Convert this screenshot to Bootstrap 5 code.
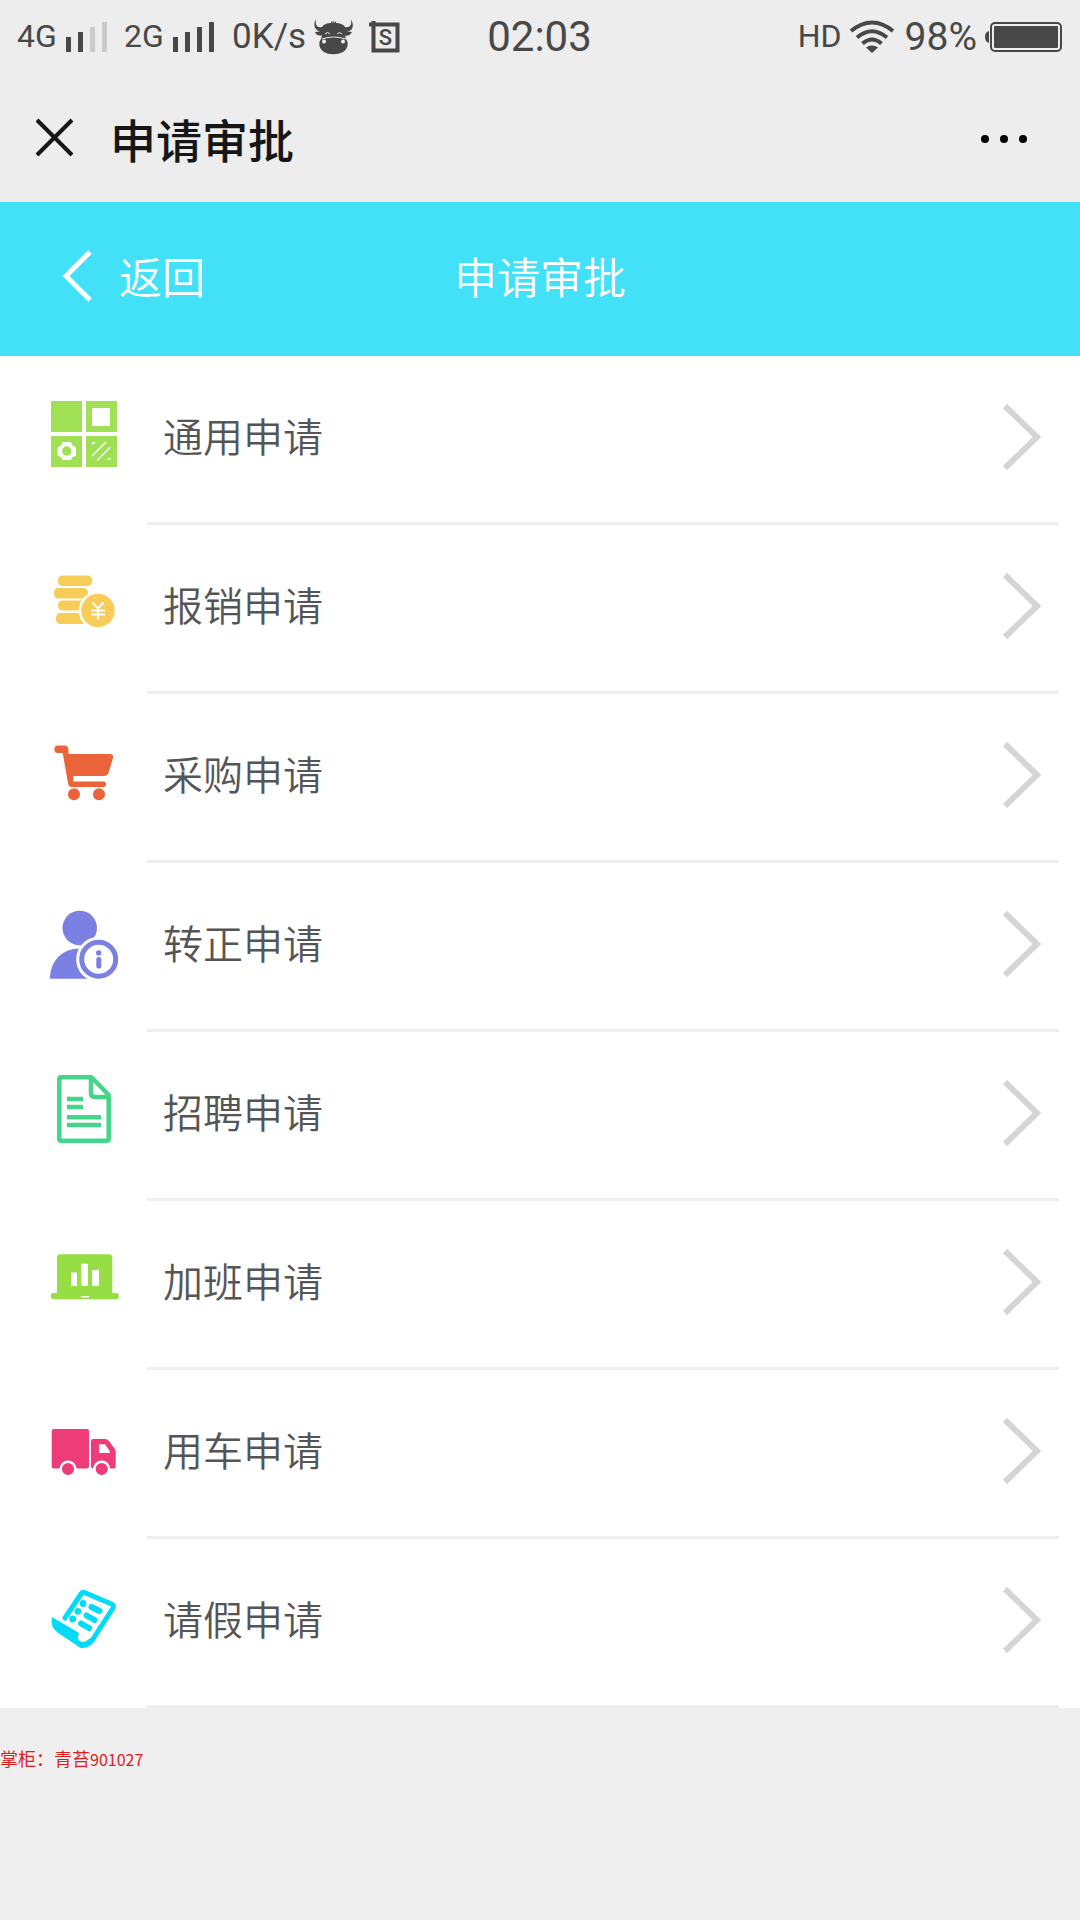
<!DOCTYPE html>
<html lang="zh-CN">
<head>
<meta charset="utf-8">
<meta name="viewport" content="width=device-width, initial-scale=1">
<title>申请审批</title>
<link href="https://cdn.jsdelivr.net/npm/bootstrap@5.3.0/dist/css/bootstrap.min.css" rel="stylesheet">
<style>
  body { background: #efefef; font-family: Roboto, "Noto Sans CJK SC", sans-serif; color: #555; }
  svg { display: block; flex: none; overflow: visible; }
  .status-bar { background: #ededed; color: #484848; height: 74px; padding: 0 18px 0 17px; line-height: 40px; }
  .status-side { flex: 1 1 0; }
  .net-label { font-size: 32px; width: 49px; margin-bottom: 3px; }
  .net-next { margin-left: 17px; }
  .rate-label { font-size: 35px; margin-left: 18px; width: 83px; }
  .clock { font-size: 42px; }
  .hd-label { font-size: 32px; font-weight: 400; margin-bottom: 3px; }
  .power-label { font-size: 39px; margin-left: 11px; }
  .app-bar { background: #ededed; color: #161616; height: 128px; padding: 0 50px 0 34px; }
  .app-title { font: 500 46px/60px "Noto Sans CJK SC", sans-serif; }
  .plain-btn { background: none; border: 0; padding: 0; color: inherit; }
  .page-bar { background: #42e1f8; height: 154px; padding: 0 62px 8px; font: 350 43px/60px "Noto Sans CJK SC", sans-serif; }
  .apply-list { --bs-list-group-bg: #fff; }
  .apply-item { height: 169px; color: #555; }
  .apply-item:hover { color: #333; }
  .apply-icon { width: 147px; padding: 0 0 7px 48px; }
  .apply-body { border-bottom: 3px solid #eee; margin-right: 21px; padding: 0 18px 4px 16px; font: 350 40px/60px "Noto Sans CJK SC", sans-serif; }
  .apply-name { padding-bottom: 4px; }
  .owner-note { color: #dd1e1e; font: 400 18px/28px "Noto Sans CJK SC", sans-serif; padding-top: 36px; }
  .owner-id { font-size: 16px; }
</style>
<script src="https://cdn.jsdelivr.net/npm/bootstrap@5.3.0/dist/js/bootstrap.bundle.min.js"></script>
</head>
<body>
<div class="status-bar d-flex align-items-center">
  <div class="status-side d-flex align-items-center">
    <span class="net-label">4G</span>
    <svg width="41" height="32" fill="currentColor"><path d="M0 16h5v15H0zM12 11h5v20h-5z"/><path fill="#cbcbcb" d="M24 6h5v25h-5zM36 1h5v30h-5z"/></svg>
    <span class="net-label net-next">2G</span>
    <svg width="41" height="32" fill="currentColor"><path d="M0 16h5v15H0zM12 11h5v20h-5zM24 6h5v25h-5zM36 1h5v30h-5z"/></svg>
    <span class="rate-label">0K/s</span>
    <svg width="38" height="36" fill="currentColor"><path d="M1 0C0 6 2 9 7 8C9 5 12 4 16 4L16 2L17.500 4L18 1L19 4L21 2L21 4C25 4 28 5 30 8C35 9 37 6 36 0C40 8 37 12 32 12.500L37 13C35 17 32 17 30 16.500L31 20C34 24 33 30 28 33C22 36 14 36 9 33C4 30 3 24 6 20L7 16.500C4 17 1 16 0 13L5 12.500C-1 11-2 5 1 0Z"/><g fill="none" stroke="#ededed"><path d="M10 15q2.500-3 5 0M22 15q2.500-3 5 0M7 20q11.500-4 24 0"/></g><circle cx="9" cy="22.500" r="2" fill="#ededed"/><circle cx="28" cy="22.500" r="2" fill="#ededed"/></svg>
    <svg class="ms-3" width="32" height="34"><path d="M5 4.500H28.500V30.500H4.500V1M0 4.500H5" fill="none" stroke="currentColor" stroke-width="4"/><text x="16.500" y="25" text-anchor="middle" font-size="22" font-weight="500" fill="currentColor">S</text></svg>
  </div>
  <span class="clock">02:03</span>
  <div class="status-side d-flex align-items-center justify-content-end">
    <span class="hd-label me-2">HD</span>
    <svg width="44" height="34" viewBox="0 0 44 34" fill="none" stroke="currentColor" stroke-width="4"><path d="M1 11Q22-6 43 11M7 17.500Q22 5 37 17.500M12.500 23.500Q22 15.500 31.500 23.500"/><path d="M22 33L16 27.500Q22 23.500 28 27.500Z" fill="currentColor" stroke="none"/></svg>
    <span class="power-label me-2">98%</span>
    <svg width="77" height="30"><rect x="6" y="1" width="70" height="28" rx="4" fill="none" stroke="currentColor" stroke-width="2"/><rect x="9" y="4" width="64" height="22" rx="1" fill="currentColor"/><path d="M4 9v12q-4-1-4-6t4-6" fill="currentColor"/></svg>
  </div>
</div>

<header class="app-bar d-flex align-items-center">
  <button class="plain-btn" type="button" aria-label="关闭"><svg width="40" height="40" fill="none" stroke="currentColor" stroke-width="4"><path d="M3 2L38 37M38 2L3 37"/></svg></button>
  <h1 class="app-title mb-0 flex-grow-1 ps-4"><span class="ps-2 ms-1">申请审批</span></h1>
  <button class="plain-btn" type="button" aria-label="更多"><svg width="50" height="20" fill="#000"><circle cx="5" cy="11" r="4"/><circle cx="24" cy="11" r="4"/><circle cx="43" cy="11" r="4"/></svg></button>
</header>

<nav class="page-bar d-flex align-items-center text-white">
  <div class="status-side d-flex"><a href="#" class="d-flex align-items-center text-white text-decoration-none"><svg width="57" height="54" fill="none" stroke="currentColor" stroke-width="5"><path d="M28 4L4 28L28 52"/></svg>返回</a></div>
  <span>申请审批</span>
  <div class="status-side"></div>
</nav>

<main class="apply-list list-group list-group-flush bg-white">
  <a href="#" class="apply-item d-flex text-decoration-none">
    <span class="apply-icon d-flex align-items-center flex-shrink-0"><svg width="72" height="80" viewBox="0 0 72 80" fill="#9fe055"><path d="M3 4h31v31H3zM38 4h31v31H38zM3 39h31v31H3zM38 39h31v31H38z"/><path fill="#fff" d="M44 11h18v18H44zM14.500 45h8.500l1 3 4 2.500v8L24 60.500 23 63H14.500L13.500 60.500 9.500 58.500v-8L13.500 48zM44 45h4l-4 3zM62.500 63h-4l4-3z"/><circle cx="18.700" cy="54" r="4.700"/><path d="M44 59L58 45M49 63.500L62.500 50" stroke="#fff" stroke-width="1.500"/></svg></span>
    <span class="apply-body flex-grow-1 d-flex align-items-center justify-content-between"><span class="apply-name">通用申请</span> <svg width="40" height="70" fill="none" stroke="#d5d5d5" stroke-width="6"><path d="M4 4L36 35L4 66"/></svg></span>
  </a>
  <a href="#" class="apply-item d-flex text-decoration-none">
    <span class="apply-icon d-flex align-items-center flex-shrink-0"><svg width="72" height="80" viewBox="0 0 72 80" fill="#f8cc58"><rect x="10" y="9.500" width="34" height="10.500" rx="4.500"/><rect x="6" y="22" width="34" height="10.500" rx="4.500"/><rect x="10" y="34.500" width="32" height="10" rx="4.500"/><rect x="8" y="47" width="34" height="11" rx="4.500"/><circle cx="50" cy="44.500" r="18" stroke="#fff" stroke-width="2.500"/><path d="M44.500 36.500L50 42.500L55.500 36.500M50 42V53M43 44.500H57M43 48.500H57" fill="none" stroke="#fff" stroke-width="2"/></svg></span>
    <span class="apply-body flex-grow-1 d-flex align-items-center justify-content-between"><span class="apply-name">报销申请</span> <svg width="40" height="70" fill="none" stroke="#d5d5d5" stroke-width="6"><path d="M4 4L36 35L4 66"/></svg></span>
  </a>
  <a href="#" class="apply-item d-flex text-decoration-none">
    <span class="apply-icon d-flex align-items-center flex-shrink-0"><svg width="72" height="80" viewBox="0 0 72 80" fill="#ea6339"><path d="M10 10.500H17Q20 10.500 20.300 14L20.700 19H62Q66 19 65 23L60.500 38Q59.500 41 56 41H25L25.500 46.500H55.500Q58 46.500 58 49.300T55.500 52H24Q20.500 52 20 48L14.700 18H10Q6.300 18 6.300 14.300T10 10.500Z"/><circle cx="26" cy="59.300" r="6"/><circle cx="51" cy="59.300" r="6"/></svg></span>
    <span class="apply-body flex-grow-1 d-flex align-items-center justify-content-between"><span class="apply-name">采购申请</span> <svg width="40" height="70" fill="none" stroke="#d5d5d5" stroke-width="6"><path d="M4 4L36 35L4 66"/></svg></span>
  </a>
  <a href="#" class="apply-item d-flex text-decoration-none">
    <span class="apply-icon d-flex align-items-center flex-shrink-0"><svg width="72" height="80" viewBox="0 0 72 80" fill="#7b80e3"><circle cx="31.700" cy="24" r="17.300"/><path d="M2 74.700C2 56 15 44.500 32 44.500L44 60V74.700Z"/><circle cx="50.700" cy="55.300" r="22.500" fill="#fff"/><circle cx="50.700" cy="55.300" r="17" fill="none" stroke="#7b80e3" stroke-width="5"/><circle cx="50.700" cy="49" r="2.700"/><rect x="48.300" y="53" width="5" height="11.500" rx="2"/></svg></span>
    <span class="apply-body flex-grow-1 d-flex align-items-center justify-content-between"><span class="apply-name">转正申请</span> <svg width="40" height="70" fill="none" stroke="#d5d5d5" stroke-width="6"><path d="M4 4L36 35L4 66"/></svg></span>
  </a>
  <a href="#" class="apply-item d-flex text-decoration-none">
    <span class="apply-icon d-flex align-items-center flex-shrink-0"><svg width="72" height="80" viewBox="0 0 72 80" fill="none" stroke="#44d58b" stroke-width="4.500" stroke-linejoin="round"><path d="M13 4.300H43.500L60.700 22V66Q60.700 67.700 59 67.700H13Q11.300 67.700 11.300 66V6Q11.300 4.300 13 4.300ZM43 5V20Q43 24 47 24H60M19 26H35M19 34H35M19 44.300H53M19 52H53"/></svg></span>
    <span class="apply-body flex-grow-1 d-flex align-items-center justify-content-between"><span class="apply-name">招聘申请</span> <svg width="40" height="70" fill="none" stroke="#d5d5d5" stroke-width="6"><path d="M4 4L36 35L4 66"/></svg></span>
  </a>
  <a href="#" class="apply-item d-flex text-decoration-none">
    <span class="apply-icon d-flex align-items-center flex-shrink-0"><svg width="72" height="80" viewBox="0 0 72 80" fill="#97de45"><path d="M12 12.300H61Q64.300 12.300 64.300 16V51H68Q71 51 71 54T68 57.300H6Q2.700 57.300 2.700 54T6 51H9V16Q9 12.300 12 12.300Z"/><path fill="#fff" d="M23 30.500h6v13.500h-6zM33.300 21.700h6.700V44h-6.700zM44 28h7v16h-7zM32.500 54h9q-1 1.500-2 1.500h-5q-1 0-2-1.500z"/></svg></span>
    <span class="apply-body flex-grow-1 d-flex align-items-center justify-content-between"><span class="apply-name">加班申请</span> <svg width="40" height="70" fill="none" stroke="#d5d5d5" stroke-width="6"><path d="M4 4L36 35L4 66"/></svg></span>
  </a>
  <a href="#" class="apply-item d-flex text-decoration-none">
    <span class="apply-icon d-flex align-items-center flex-shrink-0"><svg width="72" height="80" viewBox="0 0 72 80" fill="#ee3c78"><rect x="3.700" y="18" width="37.300" height="39.500" rx="2"/><path d="M45 28H57Q59.500 28 61 30L66.500 37.500Q67.700 39 67.700 41V55.500Q67.700 57.500 66 57.500H45Q43 57.500 43 55.500V30Q43 28 45 28Z"/><path fill="#fff" d="M51 33.300H57L61.700 40V42H51Z"/><circle cx="20" cy="58" r="7.300" stroke="#fff" stroke-width="2.400"/><circle cx="53.700" cy="58" r="7.300" stroke="#fff" stroke-width="2.400"/></svg></span>
    <span class="apply-body flex-grow-1 d-flex align-items-center justify-content-between"><span class="apply-name">用车申请</span> <svg width="40" height="70" fill="none" stroke="#d5d5d5" stroke-width="6"><path d="M4 4L36 35L4 66"/></svg></span>
  </a>
  <a href="#" class="apply-item d-flex text-decoration-none">
    <span class="apply-icon d-flex align-items-center flex-shrink-0"><svg width="72" height="80" viewBox="0 0 72 80" fill="none" stroke="#00dcf5" stroke-linecap="round" stroke-linejoin="round"><path stroke-width="5" d="M17 38L33 14Q34.300 11.500 37 12.700L63.500 24Q66.500 25.500 65 28L45 59Q40 66 33.500 65.500"/><path fill="#00dcf5" stroke="none" d="M4 37L31 53Q28 61 34 62Q38 62 42 58L41 64Q37 69 31 67L9 52Q2 47 4 37Z"/><path stroke-width="6" d="M43.500 27L51.500 31M38.500 35.500L46.500 40M33 43.500L41 48"/><g fill="#00dcf5" stroke="none"><circle cx="35" cy="23.500" r="3.400"/><circle cx="30" cy="31.300" r="3.400"/><circle cx="24.700" cy="39" r="3.400"/></g></svg></span>
    <span class="apply-body flex-grow-1 d-flex align-items-center justify-content-between"><span class="apply-name">请假申请</span> <svg width="40" height="70" fill="none" stroke="#d5d5d5" stroke-width="6"><path d="M4 4L36 35L4 66"/></svg></span>
  </a>
</main>

<footer class="owner-note">掌柜：青苔<span class="owner-id">901027</span></footer>
</body>
</html>
